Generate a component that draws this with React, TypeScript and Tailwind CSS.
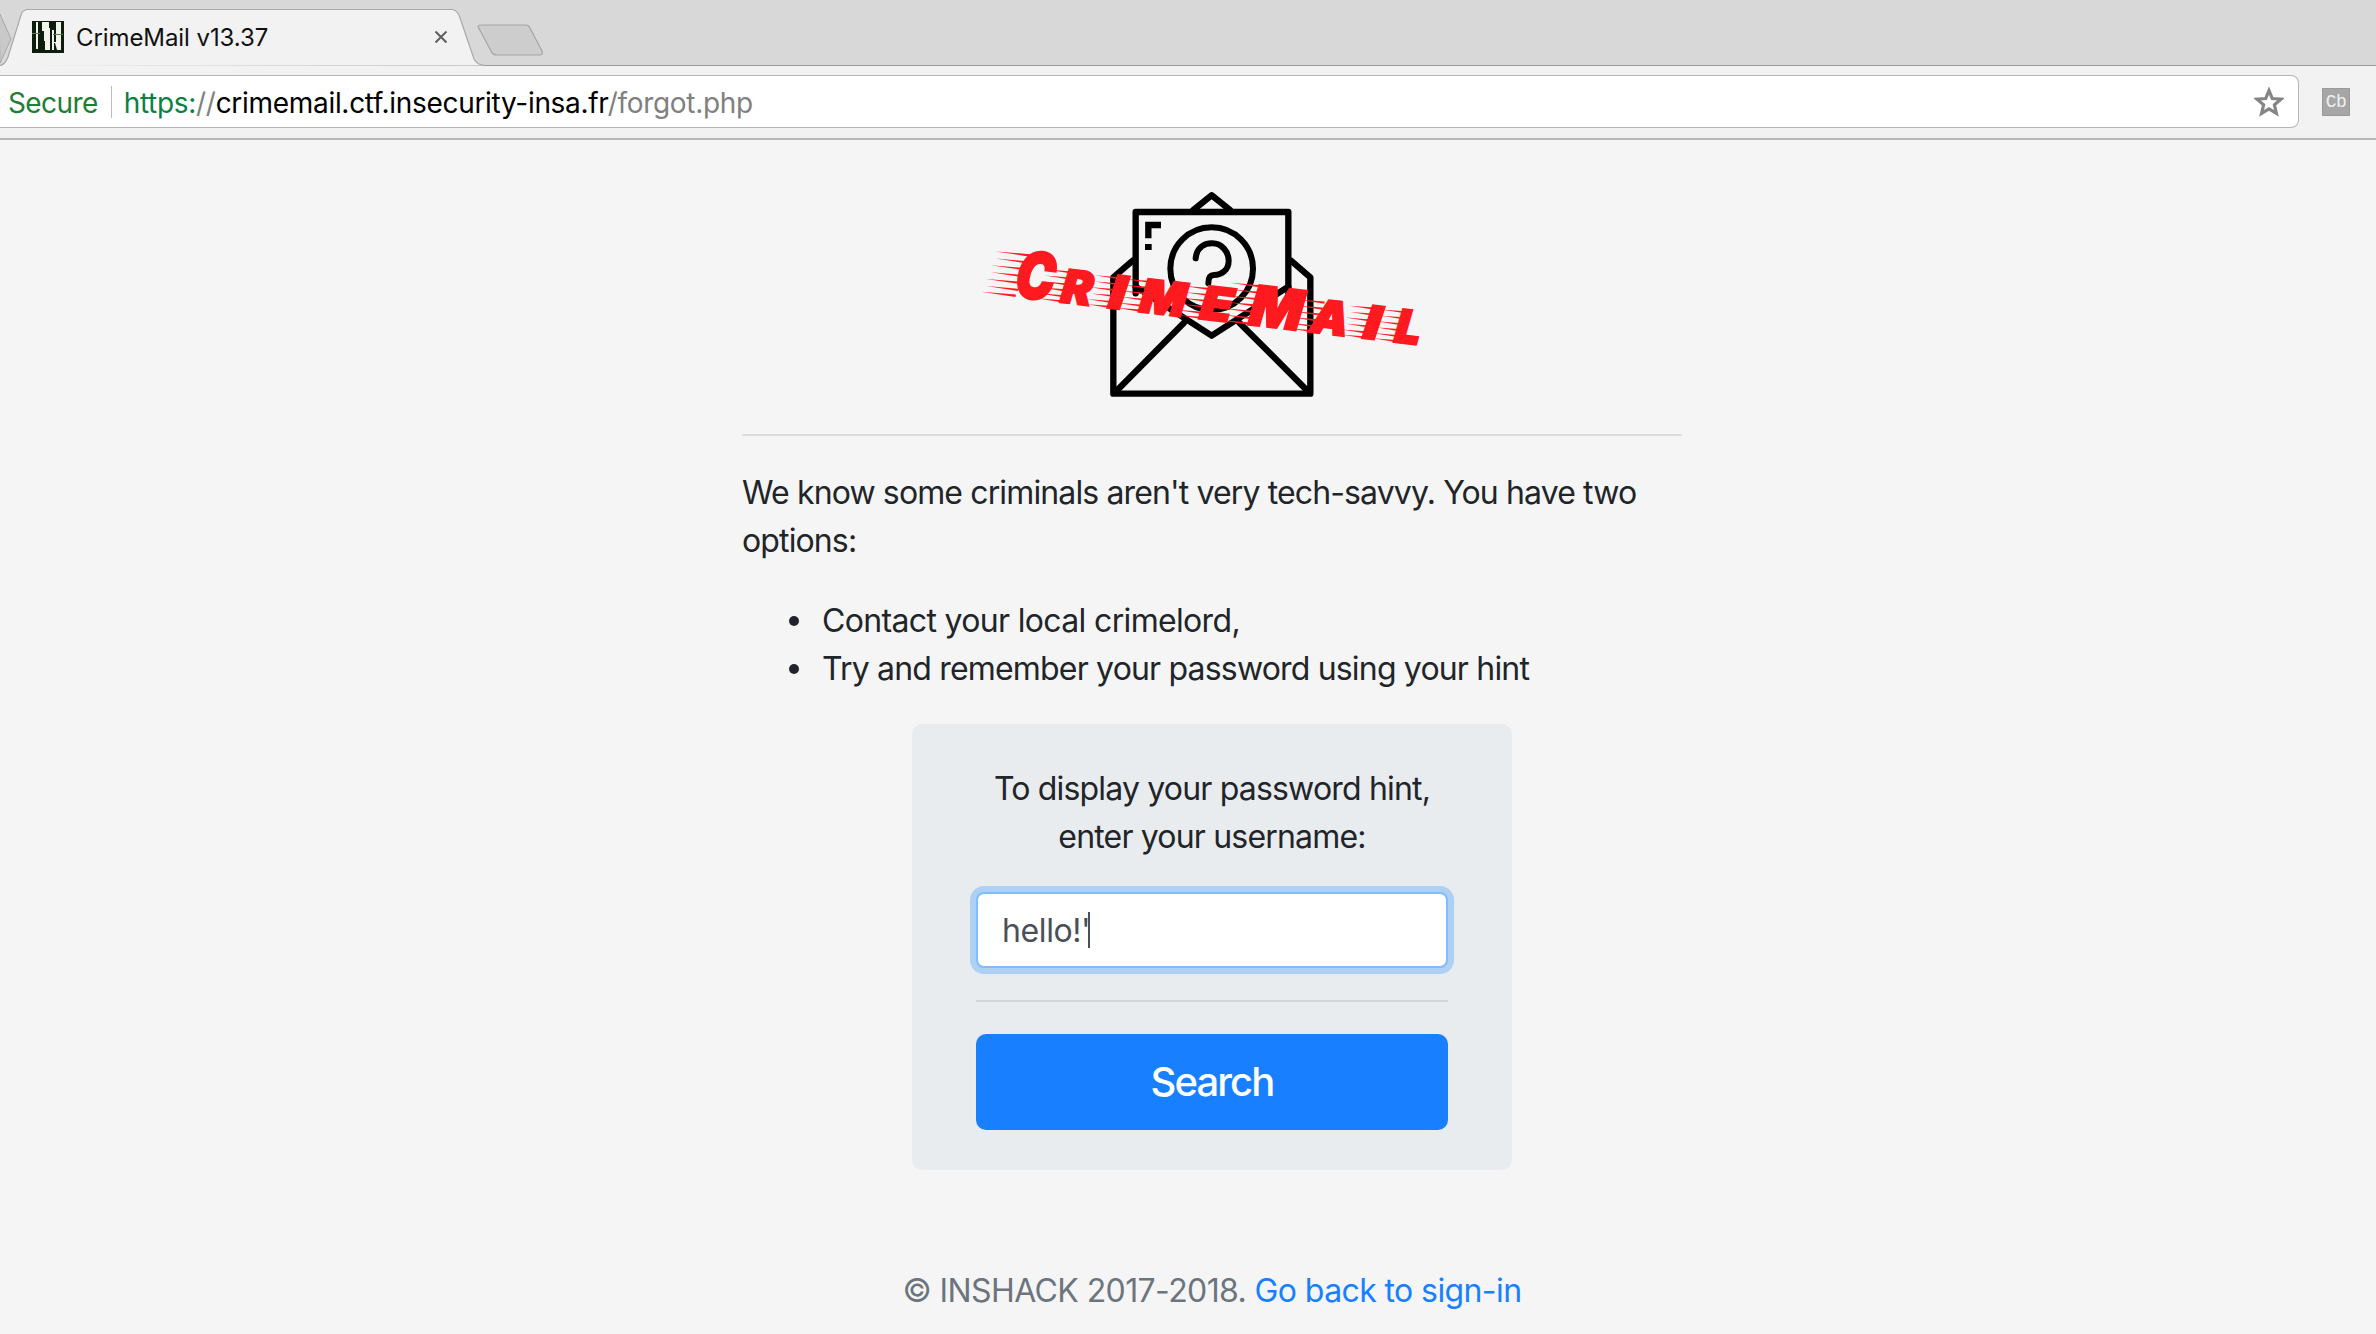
const letters = [
  { ch: "C", x: -4, w: 116, size: 194, left: 92, top: 128, n: 7 },
  { ch: "R", x: 136, w: 92, size: 138, left: 80, top: 92, n: 6 },
  { ch: "I", x: 280, w: 48, size: 138, left: 72, top: 92, n: 6 },
  { ch: "M", x: 374, w: 136, size: 138, left: 80, top: 92, n: 6 },
  { ch: "E", x: 556, w: 96, size: 138, left: 78, top: 92, n: 6 },
  { ch: "M", x: 704, w: 158, size: 166, left: 90, top: 118, n: 7 },
  { ch: "A", x: 890, w: 112, size: 138, left: 70, top: 92, n: 6 },
  { ch: "I", x: 1050, w: 48, size: 138, left: 72, top: 92, n: 6 },
  { ch: "L", x: 1144, w: 76, size: 138, left: 72, top: 92, n: 6 },
];

function Logo() {
  return (
    <svg viewBox="0 0 1440 696" className="block h-[232px] w-[480px]">
      <g fill="none" stroke="#000" strokeWidth="19" strokeLinejoin="round" strokeLinecap="round">
        <path d="M700 120 L755 76 L810 120" />
        <path d="M527 370 L527 126 L985 126 L985 370" />
        <path d="M527 350 L755 497 L985 350" />
        <path d="M565 205 L565 165 L603 165" strokeLinecap="butt" strokeLinejoin="miter" />
        <circle cx="755" cy="296" r="124" strokeWidth="18" />
        <path d="M707 265 C710 235 730 220 757 220 C785 220 806 245 806 272 C806 300 785 315 762 315 C752 315 745 322 745 340" strokeWidth="18" />
        <path d="M518 272 L460 322 L460 671 L1051 671 L1051 322 L993 272" />
        <path d="M470 662 L672 458" />
        <path d="M1042 662 L838 458" />
      </g>
      <rect x="555" y="222" width="20" height="18" fill="#000" />
      <g transform="translate(165 380) rotate(6.8)" fill="#ff1a20">
        {letters.map((l, i) => (
          <g key={i}>
            {Array.from({ length: l.n }).map((_, j) => {
              const y = -l.top + (j * l.top) / (l.n - 1) + (j === l.n - 1 ? -3 : 0);
              const skew = (j * l.top) / (l.n - 1) * -0.22 + 22;
              const x0 = l.x - l.left + skew + (j % 2 ? 8 : 0);
              const x1 = l.x + skew + 12;
              return <polygon key={j} points={`${x0},${y} ${x1},${y - 3.5} ${x1},${y + 3.5}`} />;
            })}
            <text
              x={l.x}
              y={0}
              fontFamily="Inter, 'Liberation Sans', sans-serif"
              fontWeight="900"
              fontStyle="italic"
              fontSize={l.size}
              textLength={l.w}
              lengthAdjust="spacingAndGlyphs"
              stroke="#ff1a20"
              strokeWidth="7"
            >
              {l.ch}
            </text>
          </g>
        ))}
      </g>
    </svg>
  );
}

function Favicon() {
  return (
    <svg viewBox="0 0 32 32" className="h-8 w-8 shrink-0">
      <rect width="32" height="32" fill="#0d1f0c" />
      <path d="M4 1h2v27H4zM10 1h7v6h1v22h-5v-9h-1V10h-2zM20 9h2v12h2V1h5v28h-4l-2-7h-1v7h-2z" fill="#f2f4ee" />
      <path d="M0 12h8v1H0zM21 13h10v1H21z" fill="#5d7a52" />
    </svg>
  );
}

function TabShape() {
  return (
    <svg width="560" height="58" viewBox="0 0 560 58" className="absolute left-0 top-0 overflow-visible">
      <path d="M-1 3 L11 30 L0 54 Z" fill="#c9c9c9" stroke="#a8a8a8" strokeWidth="1" />
      <path
        d="M-2 57 C4 56 6 53 8 48 L21 6 C22 2 25 0.5 29 0.5 L451 0.5 C455 0.5 457 2 459 6 L474 50 C476 54 479 56.5 486 56.5"
        fill="#f2f2f2"
        stroke="#a9a9a9"
        strokeWidth="1.2"
      />
      <path d="M-2 57.5 L486 57.5" stroke="#f2f2f2" strokeWidth="1" />
      <path
        d="M478 17.5 C478 16.5 479 16 481 16 L526 16 C528 16 529 17 530 19 L542 42 C543 45 542 46 539 46 L497 46 C494 46 492 45 491 42 Z"
        fill="#cdcdcd"
        stroke="#a6a6a6"
        strokeWidth="1.2"
      />
    </svg>
  );
}

function Bullet({ children, className }: { children: string; className: string }) {
  return (
    <li className={`flex items-center ${className}`}>
      <span className="mr-[23px] h-[10px] w-[10px] shrink-0 rounded-full bg-[#212529]" />
      {children}
    </li>
  );
}

export default function App() {
  return (
    <div className="flex h-screen flex-col overflow-hidden bg-[#f5f5f5] font-[Inter,sans-serif] text-[32px] leading-[48px] tracking-[-0.82px] text-[#212529]">
      <header className="shrink-0">
        <div className="h-[66px] border-b border-[#9b9b9b] bg-[#d8d8d8] pt-[9px]">
          <div className="relative flex h-[57px] w-[478px] items-center pb-[1px] pl-[32px] pr-[36px]">
            <TabShape />
            <div className="relative flex w-full items-center">
              <Favicon />
              <span className="ml-[12px] flex-1 pt-[1px] text-[24px] leading-[32px] tracking-[-0.08px] text-[#111]">CrimeMail v13.37</span>
              <svg width="16" height="16" viewBox="0 0 16 16" className="mr-[-7px]">
                <path d="M2.5 2.5 L13.5 13.5 M13.5 2.5 L2.5 13.5" stroke="#5f5f5f" strokeWidth="2" />
              </svg>
            </div>
          </div>
        </div>
        <div className="flex h-[74px] items-center border-b-2 border-[#b8b8b8] bg-[#f2f2f2] pb-[2px] pr-[26px] pt-[1px]">
          <div className="flex h-[53px] flex-1 items-center rounded-r-[8px] border border-l-0 border-[#b5b5b5] bg-white pl-[8px] pr-[14px] text-[28px] leading-[36px] tracking-[-0.3px]">
            <span className="pt-[2px] tracking-[-0.6px] text-[#1e7e34]">Secure</span>
            <span className="ml-[13px] mr-[12px] h-[32px] w-px bg-[#bdbdbd]" />
            <span className="flex-1 pt-[2px]">
              <span className="text-[#0b8043]">https:</span>
              <span className="text-[#808080]">//</span>
              <span className="text-black">crimemail.ctf.insecurity-insa.fr</span>
              <span className="text-[#808080]">/forgot.php</span>
            </span>
            <svg width="30" height="30" viewBox="0 0 30 30" className="shrink-0">
              <path d="M15 3.5 L18.3 11.5 L27 12.2 L20.4 17.9 L22.4 26.4 L15 21.9 L7.6 26.4 L9.6 17.9 L3 12.2 L11.7 11.5 Z" fill="#fff" stroke="#858585" strokeWidth="3.2" />
            </svg>
          </div>
          <div className="ml-[23px] flex h-[28px] w-[28px] items-center justify-center border border-[#9a9a9a] bg-[#a6a6a6] font-['Liberation_Mono',monospace] text-[18px] leading-none tracking-[-0.5px] text-[#f0f0f0]">
            Cb
          </div>
        </div>
      </header>

      <main className="flex w-full flex-col items-center pl-[48px]">
        <div className="mr-[24px] mt-[30px]">
          <Logo />
        </div>
        <div className="w-[940px]">
          <hr className="mb-[33px] mt-[32px] border-0 border-t-2 border-[#dcdcdc]" />
          <p className="mb-[32px] tracking-[-0.87px]">We know some criminals aren't very tech-savvy. You have two options:</p>
          <ul className="mb-[31px] pl-[47px]">
            <Bullet className="tracking-[-0.66px]">Contact your local crimelord,</Bullet>
            <Bullet className="tracking-[-0.82px]">Try and remember your password using your hint</Bullet>
          </ul>
        </div>
        <form className="w-[600px] rounded-[10px] bg-[#e9ecef] px-[64px] pb-[40px] pt-[41px] text-center">
          <p className="mb-[31px]">
            To display your password hint,
            <br />
            enter your username:
          </p>
          <div className="relative">
            <input
              readOnly
              value="hello!'"
              className="block h-[76px] w-full rounded-[8px] border-2 border-[#80bdff] bg-white px-[24px] text-left text-[32px] tracking-[-0.4px] text-[#495057] shadow-[0_0_0_6px_rgba(0,123,255,0.25)] outline-none"
            />
            <span className="absolute left-[112px] top-[20px] h-[36px] w-[2px] bg-[#495057]" />
          </div>
          <hr className="my-[32px] border-0 border-t-2 border-[#d2d6da]" />
          <button type="button" className="block h-[96px] w-full rounded-[10px] bg-[#187fff] text-[40px] font-medium leading-[60px] tracking-[-1.9px] text-white">
            Search
          </button>
        </form>
        <p className="mt-[97px] tracking-[-0.6px] text-[#6c757d]">
          © INSHACK 2017-2018. <a className="text-[#187fff]">Go back to sign-in</a>
        </p>
      </main>
    </div>
  );
}
